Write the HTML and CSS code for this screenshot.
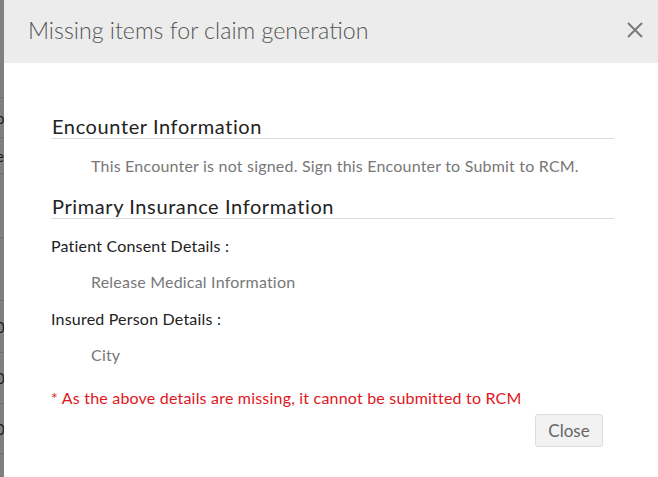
FILE: index.html
```html
<!DOCTYPE html>
<html>
<head>
<meta charset="utf-8">
<link rel="stylesheet" href="styles.css">
</head>
<body>
<div class="backdrop">
  <div class="bg-row r1"><span class="frag">o</span></div>
  <div class="bg-row r2"><span class="frag">e</span></div>
  <div class="bg-row r3"></div>
  <div class="bg-row r4"></div>
  <div class="bg-row r5"><span class="frag">0</span></div>
  <div class="bg-row r6"><span class="frag">0</span></div>
  <div class="bg-row r7"><span class="frag">0</span></div>
  <div class="bg-row r8"></div>
</div>
<div class="modal">
  <div class="modal-header">
    <h1 class="modal-title">Missing items for claim generation</h1>
    <span class="close-x">
      <svg width="16" height="16" viewBox="0 0 16 16"><path d="M1 1L15 15M15 1L1 15" stroke="#7a7a7a" stroke-width="2" fill="none"/></svg>
    </span>
  </div>
  <div class="modal-body">
    <h2 class="section-title first">Encounter Information</h2>
    <p class="item">This Encounter is not signed. Sign this Encounter to Submit to RCM.</p>
    <h2 class="section-title second">Primary Insurance Information</h2>
    <p class="label l1">Patient Consent Details :</p>
    <p class="item i1">Release Medical Information</p>
    <p class="label l2">Insured Person Details :</p>
    <p class="item i2">City</p>
    <p class="warning">* As the above details are missing, it cannot be submitted to RCM</p>
  </div>
  <div class="modal-footer">
    <button class="btn-close">Close</button>
  </div>
</div>
</body>
</html>
```
FILE: styles.css
```css
html, body {
  margin: 0;
  padding: 0;
  width: 658px;
  height: 477px;
  overflow: hidden;
  font-family: Lato, "Liberation Sans", sans-serif;
}
body {
  position: relative;
  background: #808080;
}
.backdrop {
  display: flex;
  flex-direction: column;
  padding-top: 97px;
}
.bg-row {
  border-top: 1px solid #6e6e6e;
  font-size: 15px;
  color: #1a1a1a;
  display: flex;
  align-items: center;
}
.frag { margin-left: -4px; }
.r1 { height: 39px; }
.r2 { height: 35px; }
.r3 { height: 63px; }
.r4 { height: 62px; }
.r5 { height: 51px; }
.r6 { height: 50px; }
.r7 { height: 49px; }
.r8 { height: 40px; }

.modal {
  position: absolute;
  left: 4px;
  top: 0;
  width: 657px;
  height: 477px;
  background: #fff;
  display: flex;
  flex-direction: column;
}
.modal-header {
  height: 63px;
  background: #ececec;
  display: flex;
  align-items: center;
  padding: 0 18px 0 24px;
  box-sizing: border-box;
}
.modal-title {
  flex: 1;
  margin: 0;
  font-size: 23.2px;
  font-weight: 300;
  color: #555;
  padding-bottom: 3px;
}
.close-x {
  display: flex;
  width: 16px;
  height: 16px;
  margin-bottom: 4px;
}
.modal-body {
  padding: 52px 47px 0 47px;
  display: flex;
  flex-direction: column;
}
.section-title {
  margin: 0;
  font-size: 20px;
  font-weight: 400;
  line-height: 22px;
  padding-bottom: 1px;
  letter-spacing: 0.6px;
  color: #222;
  border-bottom: 1px solid #dcdcdc;
  padding-left: 1px;
}
.section-title.second { margin-top: 19px; }
p { margin: 0; font-size: 16px; line-height: 20px; letter-spacing: 0.2px; }
.item {
  color: #777;
  padding-left: 40px;
  margin-top: 17px;
}
.label { color: #222; margin-top: 17px; }
.item.i1 { margin-top: 16px; }
.label.l2 { margin-top: 17px; }
.item.i2 { margin-top: 16px; }
.warning { color: #e0161d; margin-top: 23px; }
.modal-footer {
  display: flex;
  justify-content: flex-end;
  padding: 6px 58px 0 0;
}
.btn-close {
  width: 68px;
  height: 33px;
  background: #f2f2f2;
  border: 1px solid #dcdcdc;
  border-radius: 3px;
  font-family: Lato, "Liberation Sans", sans-serif;
  font-size: 17px;
  color: #666;
  padding: 0;
}
```
